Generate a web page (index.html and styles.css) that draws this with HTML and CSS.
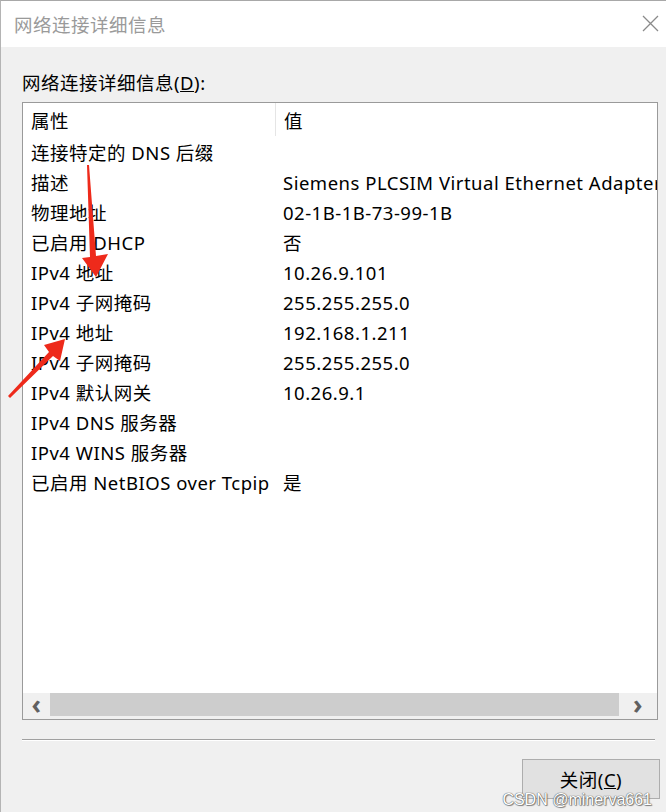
FILE: index.html
```html
<!DOCTYPE html>
<html lang="zh-CN">
<head>
    <meta charset="UTF-8">
    <meta name="viewport" content="width=device-width, initial-scale=1.0">
    <title>网络连接详细信息</title>
    <link rel="stylesheet" href="styles.css">
</head>
<body>
    <div class="window">
        <div class="titlebar">
            <span class="title">网络连接详细信息</span>
            <svg class="close" width="17" height="17" viewBox="0 0 17 17">
                <path d="M1 1 L16 16 M16 1 L1 16" stroke="#8a8a8a" stroke-width="1.3" fill="none"/>
            </svg>
        </div>
        <div class="content">
            <div class="label">网络连接详细信息(<u>D</u>):</div>
            <div class="listbox">
                <div class="row header">
                    <div class="col prop">属性</div>
                    <div class="col val">值</div>
                </div>
                <div class="rows">
                    <div class="row"><div class="col prop">连接特定的 DNS 后缀</div><div class="col val"></div></div>
                    <div class="row"><div class="col prop">描述</div><div class="col val">Siemens PLCSIM Virtual Ethernet Adapter</div></div>
                    <div class="row"><div class="col prop">物理地址</div><div class="col val">02-1B-1B-73-99-1B</div></div>
                    <div class="row"><div class="col prop">已启用 DHCP</div><div class="col val">否</div></div>
                    <div class="row"><div class="col prop">IPv4 地址</div><div class="col val">10.26.9.101</div></div>
                    <div class="row"><div class="col prop">IPv4 子网掩码</div><div class="col val">255.255.255.0</div></div>
                    <div class="row"><div class="col prop">IPv4 地址</div><div class="col val">192.168.1.211</div></div>
                    <div class="row"><div class="col prop">IPv4 子网掩码</div><div class="col val">255.255.255.0</div></div>
                    <div class="row"><div class="col prop">IPv4 默认网关</div><div class="col val">10.26.9.1</div></div>
                    <div class="row"><div class="col prop">IPv4 DNS 服务器</div><div class="col val"></div></div>
                    <div class="row"><div class="col prop">IPv4 WINS 服务器</div><div class="col val"></div></div>
                    <div class="row"><div class="col prop">已启用 NetBIOS over Tcpip</div><div class="col val">是</div></div>
                </div>
                <div class="hscroll">
                    <div class="arrow">&#x2039;</div>
                    <div class="thumb"></div>
                    <div class="arrow">&#x203A;</div>
                </div>
            </div>
            <div class="separator"></div>
            <div class="actions">
                <button type="button">关闭(<u>C</u>)</button>
            </div>
        </div>

        <!-- 截图上的红色标注箭头 -->
        <svg class="marks" width="666" height="812" viewBox="0 0 666 812">
            <polygon points="87,165 89,165 96,256 108,254 96,277 82,258 90,257" fill="#ee2a1b"/>
            <polygon points="65,339 60,361 53,356 10,398 8,396 49,352 44,345" fill="#ee2a1b"/>
        </svg>
        <div class="watermark">CSDN @minerva661</div>
    </div>
</body>
</html>
```

FILE: styles.css
```css
html, body {
    margin: 0;
    padding: 0;
}
body {
    font-family: "Noto Sans", "Noto Sans CJK SC", sans-serif;
    font-size: 18.5px;
    letter-spacing: 0.5px;
    color: #000;
    background: #f0f0f0;
}
.window {
    position: relative;
    width: 666px;
    height: 812px;
    box-sizing: border-box;
    border-left: 1px solid #b4b4b4;
    border-top: 1px solid #a8a8a8;
    overflow: hidden;
    background: #f0f0f0;
}
.titlebar {
    height: 46px;
    background: #fff;
    display: flex;
    align-items: center;
    justify-content: space-between;
    padding: 0 7px 0 13px;
}
.title {
    color: #9a9a9a;
    font-family: "Noto Sans CJK SC", sans-serif;
}
.close {
    margin-top: -1px;
}
.content {
    padding: 24px 8px 0 21px;
}
.label {
    line-height: 24px;
}
.listbox {
    margin-top: 7px;
    height: 618px;
    box-sizing: border-box;
    border: 1px solid #9a9a9a;
    background: #fff;
    display: flex;
    flex-direction: column;
}
.rows {
    flex: 1;
}
.row {
    display: flex;
    height: 30px;
    align-items: center;
    white-space: nowrap;
}
.row.header {
    height: 34px;
}
.col {
    padding-left: 8px;
    box-sizing: border-box;
}
.prop {
    width: 252px;
    flex: none;
}
.val {
    flex: 1;
    overflow: hidden;
}
.header .val {
    align-self: stretch;
    display: flex;
    align-items: center;
    border-left: 1px solid #e5e5e5;
    margin-bottom: 1px;
}
.hscroll {
    height: 26px;
    display: flex;
    background: #f0f0f0;
}
.arrow {
    width: 27px;
    text-align: center;
    font-size: 26px;
    line-height: 22px;
    color: #606060;
    font-weight: bold;
}
.arrow:last-child {
    width: 38px;
}
.thumb {
    flex: 1;
    height: 23px;
    background: #cdcdcd;
}
.separator {
    margin-top: 19px;
    margin-right: 3px;
    height: 1px;
    background: #a0a0a0;
    border-bottom: 1px solid #fff;
}
.actions {
    display: flex;
    justify-content: flex-end;
    margin-right: -2px;
    padding-top: 18px;
}
button {
    width: 138px;
    height: 40px;
    font-family: inherit;
    font-size: 18.5px;
    letter-spacing: 0.5px;
    color: #000;
    background: #e1e1e1;
    border: 1px solid #adadad;
    padding: 0;
}
.marks {
    position: absolute;
    left: -1px;
    top: -1px;
    pointer-events: none;
}
.watermark {
    position: absolute;
    right: 14px;
    bottom: 3px;
    font-family: "Liberation Sans", Arial, sans-serif;
    font-size: 16px;
    letter-spacing: 0;
    color: #fff;
    text-shadow: 0 0 1px #555, 0 0 1px #555, 1px 1px 1px #888;
}
```
